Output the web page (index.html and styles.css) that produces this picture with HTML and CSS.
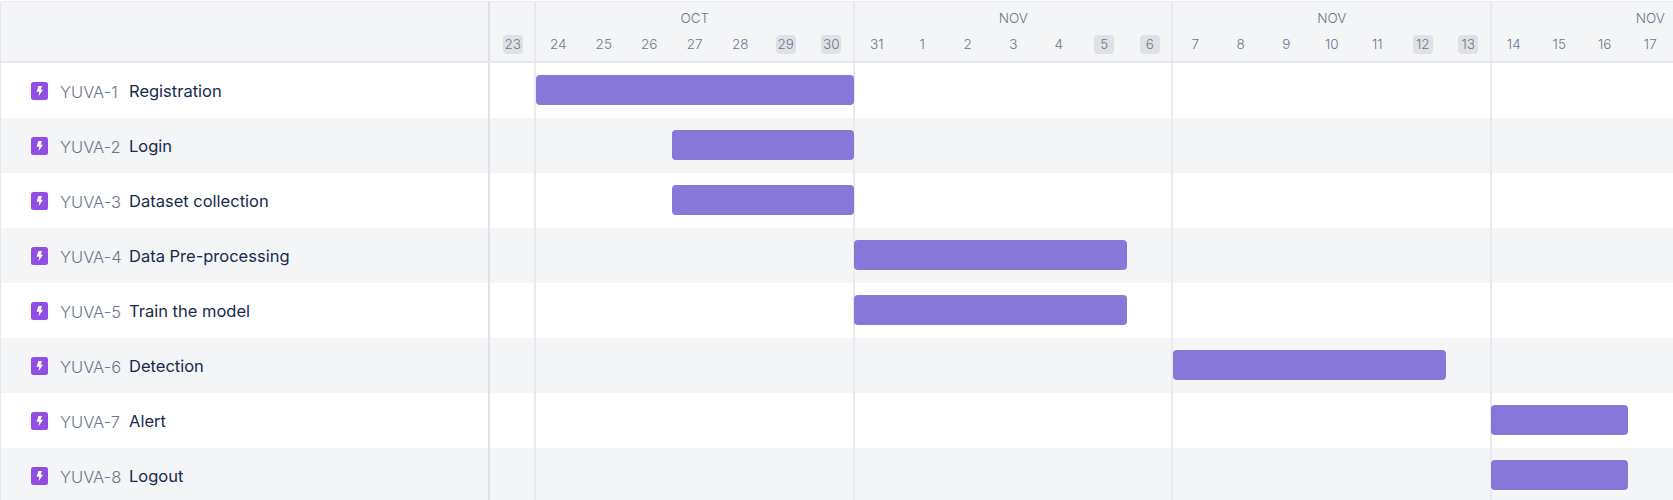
FILE: index.html
```html
<!DOCTYPE html>
<html lang="en">
<head>
  <meta charset="UTF-8">
  <meta name="viewport" content="width=device-width, initial-scale=1.0">
  <title>Timeline</title>
  <link rel="stylesheet" href="styles.css">
</head>
<body>
  <svg class="defs" width="0" height="0">
    <symbol id="epic" viewBox="0 0 17 18">
      <rect width="17" height="18" rx="2.5" fill="#904ee2"/>
      <path d="M7.4 4H11L9.7 7.8H12L7.5 14.2 8.3 9.8H5.6z" fill="#fff"/>
    </symbol>
  </svg>

  <div class="gantt">
    <!-- header -->
    <div class="row head">
      <div class="label"></div>
      <div class="timeline">
        <div class="month m-oct">OCT</div>
        <div class="month m-nov1">NOV</div>
        <div class="month m-nov2">NOV</div>
        <div class="month m-nov3">NOV</div>
        <div class="day"><span class="off">23</span></div>
        <div class="day"><span>24</span></div>
        <div class="day"><span>25</span></div>
        <div class="day"><span>26</span></div>
        <div class="day"><span>27</span></div>
        <div class="day"><span>28</span></div>
        <div class="day"><span class="off">29</span></div>
        <div class="day"><span class="off">30</span></div>
        <div class="day"><span>31</span></div>
        <div class="day"><span>1</span></div>
        <div class="day"><span>2</span></div>
        <div class="day"><span>3</span></div>
        <div class="day"><span>4</span></div>
        <div class="day"><span class="off">5</span></div>
        <div class="day"><span class="off">6</span></div>
        <div class="day"><span>7</span></div>
        <div class="day"><span>8</span></div>
        <div class="day"><span>9</span></div>
        <div class="day"><span>10</span></div>
        <div class="day"><span>11</span></div>
        <div class="day"><span class="off">12</span></div>
        <div class="day"><span class="off">13</span></div>
        <div class="day"><span>14</span></div>
        <div class="day"><span>15</span></div>
        <div class="day"><span>16</span></div>
        <div class="day"><span>17</span></div>
      </div>
    </div>

    <!-- issues -->
    <div class="row">
      <div class="label"><svg class="icon"><use href="#epic"/></svg><span class="key">YUVA-1</span><span class="name">Registration</span></div>
      <div class="timeline"><div class="bar b-reg"></div></div>
    </div>
    <div class="row alt">
      <div class="label"><svg class="icon"><use href="#epic"/></svg><span class="key">YUVA-2</span><span class="name">Login</span></div>
      <div class="timeline"><div class="bar b-login"></div></div>
    </div>
    <div class="row">
      <div class="label"><svg class="icon"><use href="#epic"/></svg><span class="key">YUVA-3</span><span class="name">Dataset collection</span></div>
      <div class="timeline"><div class="bar b-login"></div></div>
    </div>
    <div class="row alt">
      <div class="label"><svg class="icon"><use href="#epic"/></svg><span class="key">YUVA-4</span><span class="name">Data Pre-processing</span></div>
      <div class="timeline"><div class="bar b-data"></div></div>
    </div>
    <div class="row">
      <div class="label"><svg class="icon"><use href="#epic"/></svg><span class="key">YUVA-5</span><span class="name">Train the model</span></div>
      <div class="timeline"><div class="bar b-data"></div></div>
    </div>
    <div class="row alt">
      <div class="label"><svg class="icon"><use href="#epic"/></svg><span class="key">YUVA-6</span><span class="name">Detection</span></div>
      <div class="timeline"><div class="bar b-detect"></div></div>
    </div>
    <div class="row">
      <div class="label"><svg class="icon"><use href="#epic"/></svg><span class="key">YUVA-7</span><span class="name">Alert</span></div>
      <div class="timeline"><div class="bar b-alert"></div></div>
    </div>
    <div class="row alt">
      <div class="label"><svg class="icon"><use href="#epic"/></svg><span class="key">YUVA-8</span><span class="name">Logout</span></div>
      <div class="timeline"><div class="bar b-alert"></div></div>
    </div>
  </div>
</body>
</html>
```

FILE: styles.css
```css
html, body {
  height: 100%;
  margin: 0;
  overflow: hidden;
  background-color: #fff;
}

.defs {
  display: block;
  height: 0;
}

.gantt {
  width: 1673px;
  box-sizing: border-box;
  margin-top: 1px;
  border-top: 1px solid #e6e8ec;
  border-left: 1px solid #e6e8ec;
  border-top-left-radius: 3px;
  font-family: Inter, "Liberation Sans", sans-serif;
  overflow: hidden;
}

.row {
  display: flex;
  height: 55px;
}

.alt, .head {
  background-color: #f4f5f7;
}

.head {
  height: 61px;
  border-bottom: 2px solid #e6e8ec;
  box-sizing: border-box;
}

.label {
  flex: 0 0 489px;
  box-sizing: border-box;
  display: flex;
  align-items: center;
  padding-left: 30px;
  border-right: 2px solid #dfe1e6;
}

.icon {
  flex: none;
  width: 17px;
  height: 18px;
}

.key {
  margin-left: 12px;
  width: 69px;
  font-size: 16.5px;
  font-weight: 300;
  color: #6b778c;
  position: relative;
  top: 1px;
}

.name {
  font-size: 16.5px;
  color: #172b4d;
}

/* day columns, the week lines are backgrounds so they run through every row */
.timeline {
  flex: 0 0 auto;
  width: 1320px;
  display: grid;
  grid-template-columns: repeat(29, 45.5px);
  grid-template-rows: 1fr;
  background-image:
    linear-gradient(#e9eaee, #e9eaee),
    linear-gradient(#e9eaee, #e9eaee),
    linear-gradient(#e9eaee, #e9eaee),
    linear-gradient(#e9eaee, #e9eaee);
  background-size: 2px 100%;
  background-repeat: no-repeat;
  background-position: 44px 0, 363px 0, 681px 0, 1000px 0;
}

.head .timeline {
  grid-template-rows: 33px 1fr;
  color: #6b778c;
  font-size: 13.5px;
  font-weight: 300;
}

.month {
  grid-row: 1;
  text-align: center;
  line-height: 16px;
  margin-top: 8px;
}

.m-oct { grid-column: 2 / span 7; }
.m-nov1 { grid-column: 9 / span 7; }
.m-nov2 { grid-column: 16 / span 7; }
.m-nov3 { grid-column: 23 / span 7; }

.day {
  grid-row: 2;
  text-align: center;
}

.day span {
  display: inline-block;
  min-width: 20px;
  height: 19px;
  line-height: 19px;
  border-radius: 4px;
}

.day .off {
  background-color: #dfe1e6;
}

.bar {
  grid-row: 1;
  align-self: start;
  height: 30px;
  margin-top: 12px;
  border-radius: 4px;
  background-color: #8777d9;
}

.b-reg { grid-column: 2 / span 7; }
.b-login { grid-column: 5 / span 4; }
.b-data { grid-column: 9 / span 6; }
.b-detect { grid-column: 16 / span 6; }
.b-alert { grid-column: 23 / span 3; }
```
